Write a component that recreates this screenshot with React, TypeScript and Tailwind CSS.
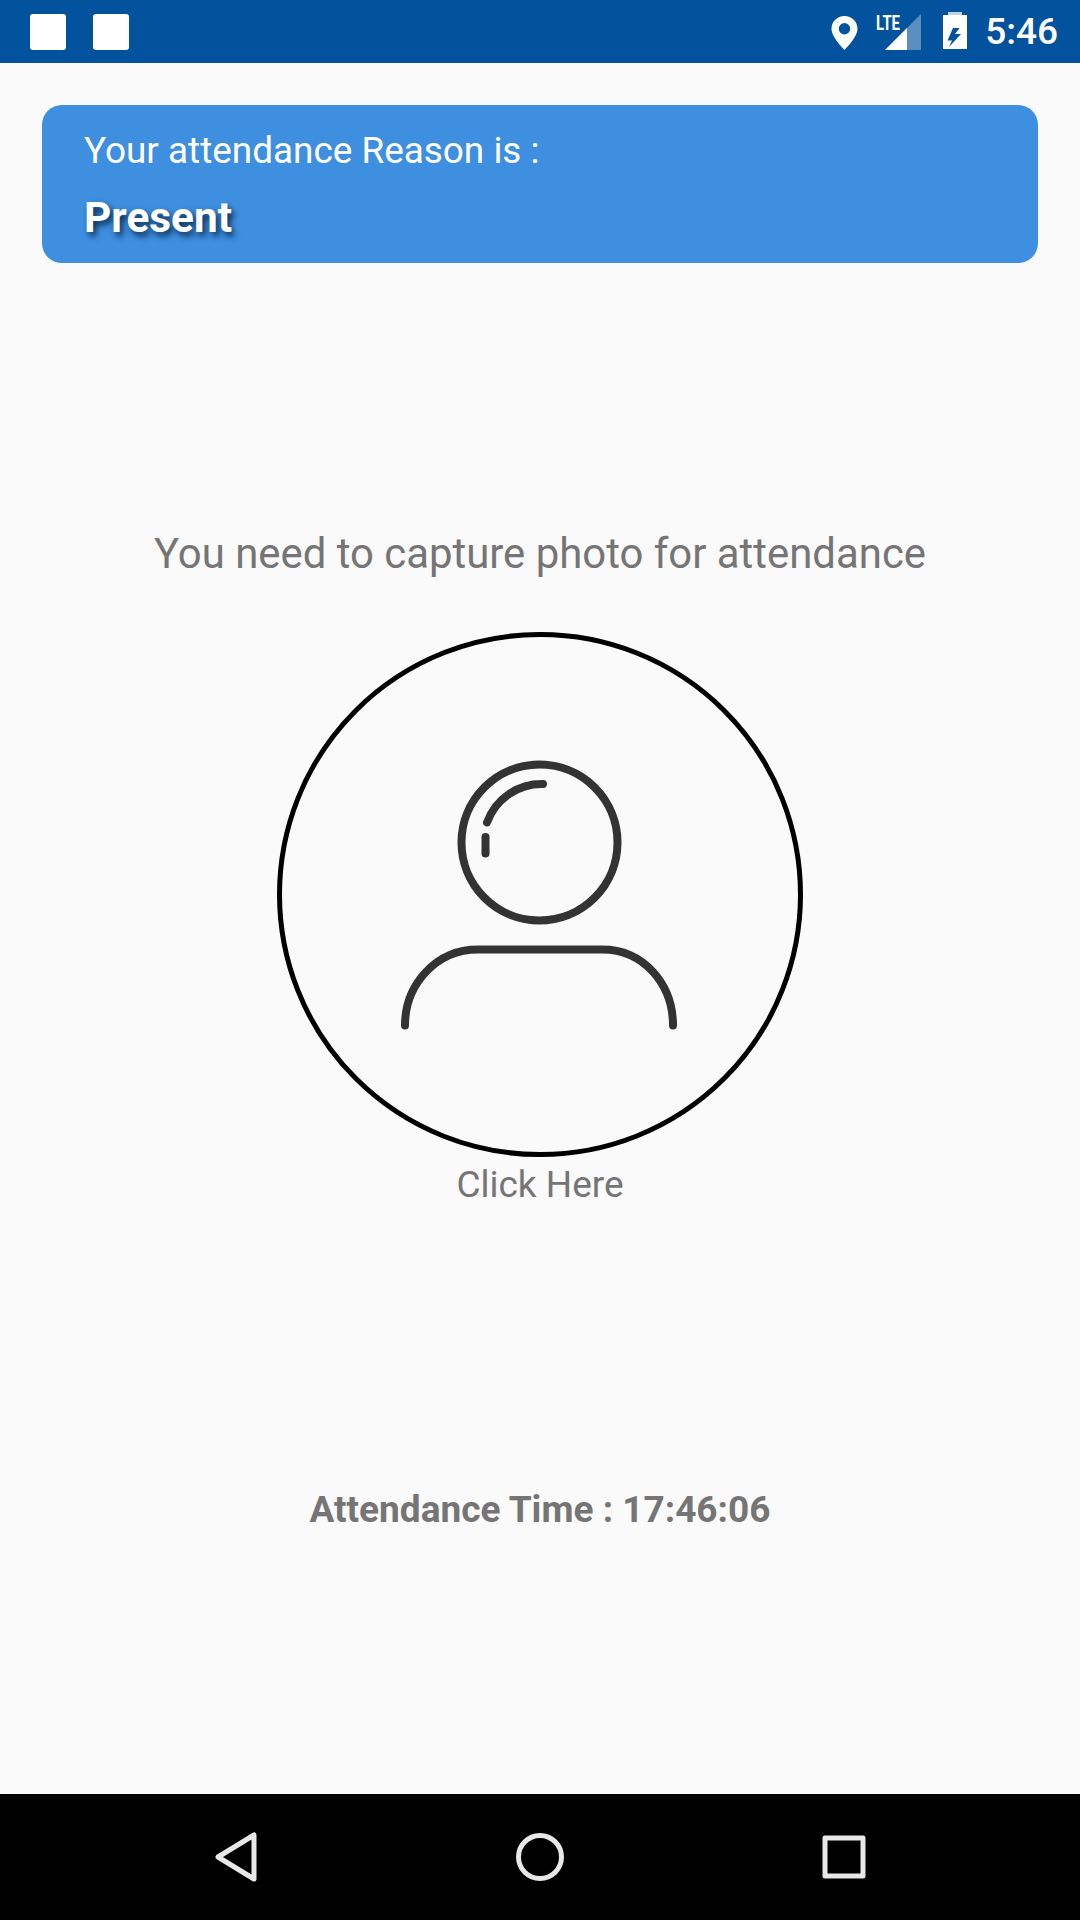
export default function App() {
  return (
    <div className="w-[1080px] h-[1920px] flex flex-col bg-[#fafafa] overflow-hidden font-['Roboto',sans-serif]">
      <header className="h-[63px] shrink-0 bg-[#03529e] flex items-center pl-[30px] pr-[22px]">
        <div className="w-[36px] h-[36px] rounded-[3px] bg-white" />
        <div className="w-[36px] h-[36px] rounded-[3px] bg-white ml-[27px]" />
        <div className="ml-auto flex items-center">
          <svg width="27" height="34" viewBox="0 0 26 34" className="mr-[18px] mt-[2px]">
            <path fillRule="evenodd" fill="#fff" d="M13 0C5.8 0 0 5.6 0 12.8 0 21.5 13 34 13 34s13-12.5 13-21.2C26 5.6 20.2 0 13 0Zm0 18.5a5.7 5.7 0 1 1 0-11.4 5.7 5.7 0 0 1 0 11.4Z" />
          </svg>
          <svg width="45" height="38" viewBox="0 0 45 38" className="mr-[22px] overflow-visible">
            <path fill="#fff" fillOpacity="0.35" d="M45 1V37H9Z" />
            <path fill="#fff" d="M31 15V37H9Z" />
            <text x="0" y="17" fontFamily="Roboto" fontWeight="700" fontSize="21" fill="#fff" textLength="24" lengthAdjust="spacingAndGlyphs">LTE</text>
          </svg>
          <svg width="24" height="37" viewBox="0 0 24 37" className="mr-[18px] mb-[2px]">
            <path fill="#fff" fillOpacity="0.75" d="M5 0h14v3H5Z" />
            <path fill="#fff" d="M0 3h24v34H0Z" />
            <path fill="#03529e" d="M10 16 4.5 28.5h4.5L6 35 18 22h-6L16.5 16Z" />
          </svg>
          <span className="text-[37px] leading-none font-medium text-white">5:46</span>
        </div>
      </header>

      <main className="flex-1 flex flex-col items-center">
        <section className="w-[996px] h-[158px] mt-[42px] rounded-[20px] bg-[#3f8fe1] pl-[42px] pt-[25px] shrink-0 self-center">
          <p className="text-[36.9px] leading-[42px] text-white">Your attendance Reason is :</p>
          <p className="mt-[25px] text-[42.4px] leading-[42px] font-bold text-white [text-shadow:3px_4px_6px_#08294d]">Present</p>
        </section>
        <p className="mt-[266px] text-[41.9px] leading-[50px] text-[#757575]">You need to capture photo for attendance</p>
        <div className="mt-[53px] w-[526px] h-[525px] rounded-full border-[5px] border-black flex items-center justify-center shrink-0">
          <svg width="280" height="260" viewBox="400 764.5 280 260" className="overflow-visible" fill="none" stroke="#333333" strokeWidth="8" strokeLinecap="round">
            <circle cx="539.5" cy="842" r="78" />
            <path d="M543 783.5A58 58 0 0 0 487 822" />
            <path d="M485.5 836.5V853" />
            <path d="M405 1025C405 984 436 949 478 949H602C644 949 673 984 673 1025" />
          </svg>
        </div>
        <p className="mt-[7px] text-[37px] leading-[42px] text-[#757575]">Click Here</p>
        <p className="mt-[283px] text-[37px] leading-[42px] font-bold text-[#757575]">Attendance Time : 17:46:06</p>
      </main>

      <footer className="h-[126px] shrink-0 bg-black flex items-center justify-between pl-[214px] pr-[214px]">
        <svg width="44" height="50" viewBox="0 0 44 50" fill="none" stroke="#e8e8e8" strokeWidth="5" strokeLinejoin="round">
          <path d="M40 3V47L4 25Z" />
        </svg>
        <svg width="48" height="48" viewBox="0 0 48 48" fill="none" stroke="#e8e8e8" strokeWidth="5">
          <circle cx="24" cy="24" r="21.5" />
        </svg>
        <svg width="44" height="44" viewBox="0 0 44 44" fill="none" stroke="#e8e8e8" strokeWidth="5" strokeLinejoin="round">
          <rect x="3" y="3" width="38" height="38" />
        </svg>
      </footer>
    </div>
  );
}
